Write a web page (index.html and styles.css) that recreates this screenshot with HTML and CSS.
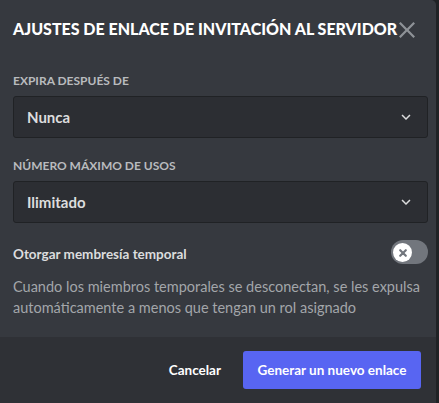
FILE: index.html
```html
<!DOCTYPE html>
<html lang="es">
<head>
<meta charset="utf-8">
<link rel="stylesheet" href="styles.css">
</head>
<body>
<div class="modal">
  <div class="header">
    <h1 class="title">Ajustes de enlace de invitación al servidor</h1>
    <button class="close" aria-label="Cerrar">
      <svg width="24" height="24" viewBox="0 0 24 24"><path d="M18.4 4L12 10.4 5.6 4 4 5.6 10.4 12 4 18.4 5.6 20 12 13.6 18.4 20 20 18.4 13.6 12 20 5.6z" fill="currentColor"/></svg>
    </button>
  </div>
  <div class="body">
    <div class="field">
      <div class="label">Expira después de</div>
      <div class="select"><span>Nunca</span>
        <svg class="chev" width="18" height="18" viewBox="0 0 24 24"><path d="M16.59 8.59L12 13.17 7.41 8.59 6 10l6 6 6-6z" fill="currentColor"/></svg>
      </div>
    </div>
    <div class="field">
      <div class="label">Número máximo de usos</div>
      <div class="select"><span>Ilimitado</span>
        <svg class="chev" width="18" height="18" viewBox="0 0 24 24"><path d="M16.59 8.59L12 13.17 7.41 8.59 6 10l6 6 6-6z" fill="currentColor"/></svg>
      </div>
    </div>
    <div class="switch-row">
      <div class="switch-label">Otorgar membresía temporal</div>
      <div class="toggle">
        <div class="knob">
          <svg width="10" height="10" viewBox="0 0 10 10"><path d="M2.2 2.2L7.8 7.8M7.8 2.2L2.2 7.8" stroke="#72767d" stroke-width="2.2" stroke-linecap="round"/></svg>
        </div>
      </div>
    </div>
    <p class="note">Cuando los miembros temporales se desconectan, se les expulsa automáticamente a menos que tengan un rol asignado</p>
  </div>
  <div class="footer">
    <button class="btn-link">Cancelar</button>
    <button class="btn-primary">Generar un nuevo enlace</button>
  </div>
</div>
</body>
</html>
```
FILE: styles.css
```css
* { box-sizing: border-box; }
html, body { margin: 0; padding: 0; }
body {
  background: #202225;
  font-family: "Lato", "Noto Sans", sans-serif;
  width: 439px;
  height: 403px;
  overflow: hidden;
}
.modal {
  width: 436px;
  height: 403px;
  background: #36393f;
  border-radius: 0 5px 0 0;
  display: flex;
  flex-direction: column;
}
.header {
  display: flex;
  align-items: center;
  padding: 0 0 0 13px;
  height: 56px;
  position: relative;
}
.title {
  margin: 0;
  font-size: 16px;
  font-weight: 900;
  text-transform: uppercase;
  color: #ffffff;
  white-space: nowrap;
}
.close {
  position: absolute;
  left: 395px;
  top: 18px;
  background: none;
  border: 0;
  padding: 0;
  color: #8e9297;
  display: flex;
}
.body {
  padding: 17px 8px 0 13px;
  flex: 1;
}
.field { margin-bottom: 20px; }
.label {
  font-size: 12px;
  font-weight: 700;
  text-transform: uppercase;
  color: #b9bbbe;
  margin-bottom: 8px;
}
.select {
  height: 42px;
  background: #2c2e33;
  border: 1px solid #202225;
  border-radius: 3px;
  display: flex;
  align-items: center;
  justify-content: space-between;
  padding: 0 12px 0 13px;
  color: #dcddde;
  font-size: 15px;
  font-weight: 700;
}
.chev { color: #dcddde; }
.switch-row {
  display: flex;
  align-items: center;
  justify-content: space-between;
  margin-top: 15px;
}
.switch-label {
  font-size: 13.5px;
  font-weight: 700;
  color: #dcddde;
}
.toggle {
  width: 37px;
  height: 24px;
  border-radius: 12px;
  background: #72767d;
  padding: 3px 3px 3px 2px;
  display: flex;
  margin-top: -3px;
}
.knob {
  width: 19px;
  height: 19px;
  border-radius: 50%;
  background: #fff;
  display: flex;
  align-items: center;
  justify-content: center;
}
.note {
  margin: 12px 0 0;
  font-size: 14.5px;
  line-height: 21px;
  color: #a3a6aa;
}
.footer {
  height: 66px;
  background: #2f3136;
  display: flex;
  align-items: center;
  justify-content: flex-end;
  padding: 0 15px 0 16px;
}
.btn-link {
  background: none;
  border: 0;
  color: #ffffff;
  font-family: inherit;
  font-size: 13.5px;
  font-weight: 700;
  padding: 0 22px;
  height: 38px;
}
.btn-primary {
  background: #5865f2;
  border: 0;
  border-radius: 3px;
  color: #ffffff;
  font-family: inherit;
  font-size: 13.5px;
  font-weight: 700;
  height: 38px;
  width: 178px;
  padding: 0;
  white-space: nowrap;
}
```
